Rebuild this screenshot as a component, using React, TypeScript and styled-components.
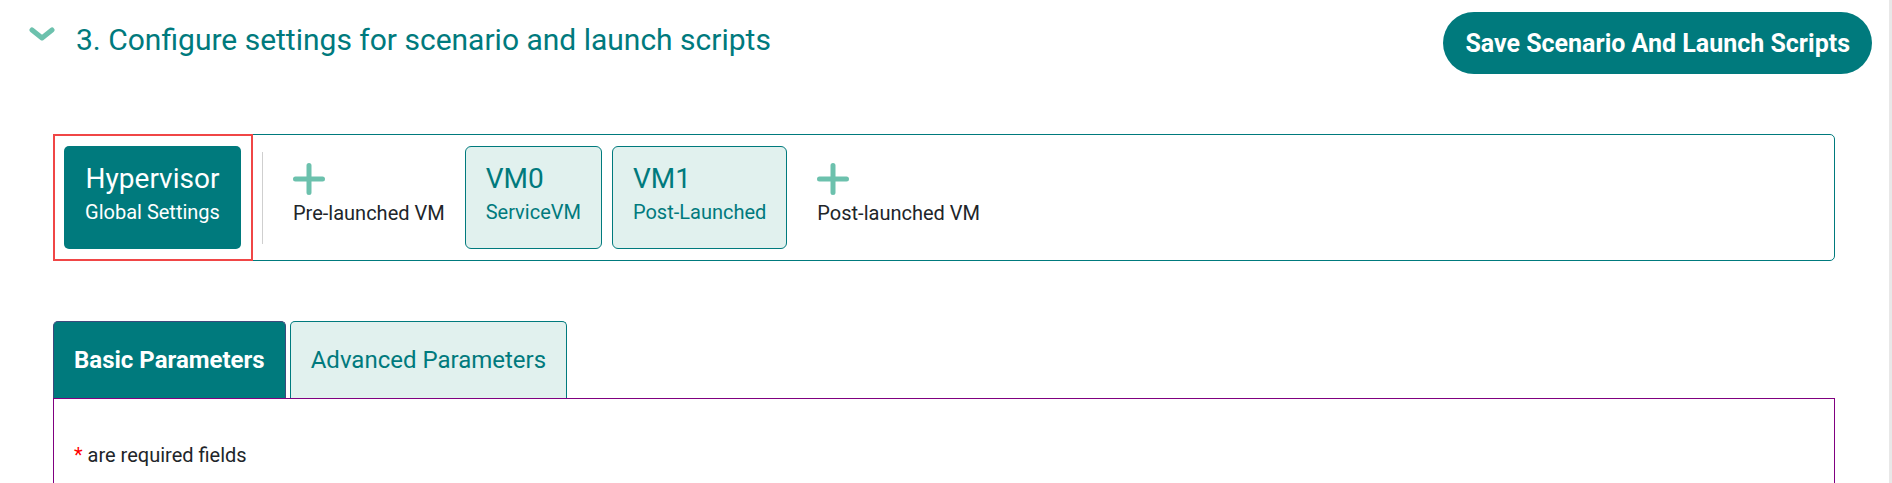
import React from "react";
import styled, { createGlobalStyle } from "styled-components";

const TEAL = "#007a7d";
const MINT = "#6cc1ad";
const LIGHT = "#e1f1ee";

const GlobalStyle = createGlobalStyle`
  html, body { margin: 0; padding: 0; background: #fff; }
  body { font-family: Roboto, "Liberation Sans", Arial, sans-serif; }
  * { box-sizing: border-box; }
`;

const Page = styled.div`
  min-height: 100vh;
  border-right: 3px solid #e8e8e8;
  overflow: hidden;
`;

const Header = styled.header`
  display: flex;
  align-items: flex-start;
  justify-content: space-between;
  padding: 12px 17px 0 29px;
`;

const TitleRow = styled.div`
  display: flex;
  align-items: flex-start;
  gap: 21px;
  margin-top: 10px;
`;

const Chevron = styled.svg`
  width: 26px;
  height: 14px;
  margin-top: 5px;
  flex: none;
`;

const Title = styled.h2`
  margin: 0;
  font-size: 30px;
  line-height: 36px;
  font-weight: 400;
  color: ${TEAL};
`;

const SaveButton = styled.button`
  height: 62px;
  padding: 0 22px;
  border: none;
  border-radius: 31px;
  background: ${TEAL};
  color: #fff;
  font-family: Roboto, sans-serif;
  font-size: 25px;
  font-weight: 700;
  cursor: pointer;
`;

const Section = styled.section`
  margin: 60px 54px 0 53px;
`;

const Panel = styled.div`
  position: relative;
  display: flex;
  align-items: stretch;
  gap: 10px;
  height: 127px;
  padding: 11px 10px;
  border: 1px solid ${TEAL};
  border-radius: 5px;
`;

const Highlight = styled.div`
  position: absolute;
  left: -1px;
  top: -1px;
  width: 200px;
  height: 127px;
  border: 2px solid #f04646;
  pointer-events: none;
`;

const HyperButton = styled.div`
  width: 177px;
  display: flex;
  flex-direction: column;
  align-items: center;
  gap: 5px;
  padding-top: 17px;
  background: ${TEAL};
  border-radius: 5px;
  color: #fff;
`;

const BigLabel = styled.div<{ $color: string }>`
  font-size: 28px;
  line-height: 32px;
  color: ${(p) => p.$color};
  white-space: nowrap;
`;

const SmallLabel = styled.div<{ $color: string }>`
  font-size: 20px;
  line-height: 24px;
  color: ${(p) => p.$color};
  white-space: nowrap;
`;

const Separator = styled.div`
  width: 1px;
  height: 92px;
  align-self: center;
  margin-left: 11px;
  background: #cfcfcf;
`;

const AddBlock = styled.div`
  display: flex;
  flex-direction: column;
  align-items: flex-start;
  gap: 6px;
  margin-left: 10px;
  padding: 17px 10px 0;
  cursor: pointer;
`;

const VmCard = styled.div`
  display: flex;
  flex-direction: column;
  align-items: flex-start;
  gap: 5px;
  padding: 16px 20px 0;
  background: ${LIGHT};
  border: 1px solid ${TEAL};
  border-radius: 6px;
  cursor: pointer;
`;

const Tabs = styled.div`
  display: flex;
  gap: 4px;
  margin-top: 60px;
`;

const Tab = styled.div<{ $active?: boolean }>`
  height: 77px;
  display: flex;
  align-items: center;
  padding: 0 20px;
  border: 1px solid ${(p) => (p.$active ? "#3d4a7c" : TEAL)};
  border-bottom: none;
  border-radius: 5px 5px 0 0;
  background: ${(p) => (p.$active ? TEAL : LIGHT)};
  color: ${(p) => (p.$active ? "#fff" : TEAL)};
  font-size: 24px;
  font-weight: ${(p) => (p.$active ? 700 : 400)};
  white-space: nowrap;
  cursor: pointer;
`;

const TabBody = styled.div`
  min-height: 200px;
  padding: 44px 20px;
  border: 1px solid #800080;
  font-size: 20px;
  line-height: 24px;
  color: #212529;
`;

const Star = styled.span`
  color: #ff0000;
`;

const Plus = () => (
  <svg width="32" height="32" viewBox="0 0 32 32">
    <path
      d="M16 2.5V29.5M2.5 16H29.5"
      stroke={MINT}
      strokeWidth="5"
      strokeLinecap="round"
    />
  </svg>
);

export default function App() {
  return (
    <>
      <GlobalStyle />
      <Page>
        <Header>
          <TitleRow>
            <Chevron viewBox="0 0 26 14">
              <polyline
                points="3,3 13,11 23,3"
                fill="none"
                stroke={MINT}
                strokeWidth="5"
                strokeLinecap="round"
                strokeLinejoin="round"
              />
            </Chevron>
            <Title>3. Configure settings for scenario and launch scripts</Title>
          </TitleRow>
          <SaveButton>Save Scenario And Launch Scripts</SaveButton>
        </Header>
        <Section>
          <Panel>
            <HyperButton>
              <BigLabel $color="#fff">Hypervisor</BigLabel>
              <SmallLabel $color="#fff">Global Settings</SmallLabel>
            </HyperButton>
            <Separator />
            <AddBlock>
              <Plus />
              <SmallLabel $color="#212529">Pre-launched VM</SmallLabel>
            </AddBlock>
            <VmCard>
              <BigLabel $color={TEAL}>VM0</BigLabel>
              <SmallLabel $color={TEAL}>ServiceVM</SmallLabel>
            </VmCard>
            <VmCard>
              <BigLabel $color={TEAL}>VM1</BigLabel>
              <SmallLabel $color={TEAL}>Post-Launched</SmallLabel>
            </VmCard>
            <AddBlock>
              <Plus />
              <SmallLabel $color="#212529">Post-launched VM</SmallLabel>
            </AddBlock>
            <Highlight />
          </Panel>
          <Tabs>
            <Tab $active>Basic Parameters</Tab>
            <Tab>Advanced Parameters</Tab>
          </Tabs>
          <TabBody>
            <Star>*</Star> are required fields
          </TabBody>
        </Section>
      </Page>
    </>
  );
}
